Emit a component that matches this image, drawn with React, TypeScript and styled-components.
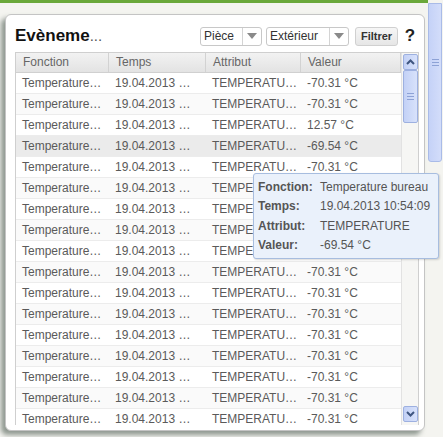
import * as React from "react";
import styled, { createGlobalStyle } from "styled-components";

const GlobalStyle = createGlobalStyle`
	html, body {
		margin: 0;
		padding: 0;
		background: #f4f4f0;
		font-family: "Liberation Sans", Arial, sans-serif;
	}
`;

// Layout
const Screen = styled.div`
	position: relative;
	display: flex;
	width: 443px;
	height: 437px;
	overflow: hidden;
`;

const Main = styled.div`
	flex: 1;
	display: flex;
	flex-direction: column;
`;

const TopBar = styled.div`
	height: 3px;
	background: #6aa83a;
`;

const Panel = styled.div`
	margin: 11px 3px 0 5px;
	height: 417px;
	box-sizing: border-box;
	background: #fff;
	border: 1px solid #c4c4c4;
	border-radius: 6px;
	box-shadow: -4px 4px 5px rgba(110, 122, 112, 0.75);
	padding: 9px 5px 0 9px;
	display: flex;
	flex-direction: column;
`;

const PanelHeader = styled.div`
	display: flex;
	align-items: center;
	height: 24px;
	margin-bottom: 4px;
`;

const Title = styled.div`
	flex: 1;
	font-size: 17px;
	font-weight: bold;
	color: #111;
	white-space: nowrap;
	span {
		font-weight: normal;
		color: #555;
		font-size: 15px;
	}
`;

const Combo = styled.div<{ width: number }>`
	display: flex;
	width: ${(p) => p.width}px;
	height: 19px;
	box-sizing: border-box;
	border: 1px solid #c8c8c8;
	border-radius: 3px;
	margin-right: 4px;
	background: #fff;
	font-size: 12px;
	color: #333;
`;

const ComboText = styled.div`
	flex: 1;
	padding-left: 3px;
	line-height: 17px;
	border-right: 1px solid #d4d4d4;
`;

const ComboArrow = styled.div`
	width: 18px;
	display: flex;
	align-items: center;
	justify-content: center;
	&::after {
		content: "";
		border-left: 5px solid transparent;
		border-right: 5px solid transparent;
		border-top: 6px solid #8a8a8a;
	}
`;

const FilterButton = styled.button`
	height: 19px;
	width: 43px;
	margin-left: 2px;
	padding: 0;
	border: 1px solid #d0d0d0;
	border-radius: 3px;
	background: linear-gradient(#f6f6f6, #e6e6e6);
	font-family: "Liberation Sans", Arial, sans-serif;
	font-size: 11px;
	font-weight: bold;
	color: #333;
`;

const Help = styled.div`
	width: 18px;
	text-align: center;
	font-size: 17px;
	font-weight: bold;
	color: #222;
	margin-left: 3px;
`;

// Grid
const GridFrame = styled.div`
	display: flex;
	width: 404px;
	height: 373px;
	box-sizing: border-box;
	border: 1px solid #cfcfcf;
	border-bottom: none;
	overflow: hidden;
`;

const GridBody = styled.div`
	flex: 1;
	display: flex;
	flex-direction: column;
	overflow: hidden;
`;

const Row = styled.div<{ $head?: boolean; $alt?: boolean; $hover?: boolean }>`
	display: grid;
	grid-template-columns: 93px 97px 95px 1fr;
	height: ${(p) => (p.$head ? 20 : 21)}px;
	flex-shrink: 0;
	box-sizing: border-box;
	border-bottom: 1px solid ${(p) => (p.$head ? "#d0d0d0" : "#ececec")};
	background: ${(p) =>
		p.$head
			? "linear-gradient(#f2f2f2, #e3e3e3)"
			: p.$hover
			? "#ebebeb"
			: p.$alt
			? "#fafafa"
			: "#fff"};
`;

const Cell = styled.div<{ $head?: boolean }>`
	padding-left: ${(p) => (p.$head ? 7 : 6)}px;
	font-size: 12px;
	line-height: ${(p) => (p.$head ? 19 : 20)}px;
	color: ${(p) => (p.$head ? "#666" : "#5a5a5a")};
	white-space: nowrap;
	overflow: hidden;
	border-right: ${(p) => (p.$head ? "1px solid #d2d2d2" : "none")};
`;

const ScrollTrack = styled.div`
	width: 17px;
	display: flex;
	flex-direction: column;
	background: #f6f6f4;
	border-left: 1px solid #e2e2e2;
	padding: 1px 0 0 1px;
	box-sizing: border-box;
`;

const ScrollButton = styled.div<{ $bottom?: boolean }>`
	width: 15px;
	height: 16px;
	box-sizing: border-box;
	margin-bottom: ${(p) => (p.$bottom ? 3 : 0)}px;
	border: 1px solid #9db0e0;
	border-radius: 2px;
	background: linear-gradient(90deg, #c3d1f6, #d8e2fb);
	display: flex;
	align-items: center;
	justify-content: center;
`;

const ScrollThumb = styled.div<{ $h: number }>`
	width: 15px;
	height: ${(p) => p.$h}px;
	box-sizing: border-box;
	border: 1px solid #9db0e0;
	border-radius: 2px;
	background: linear-gradient(90deg, #c3d1f6, #d8e2fb);
	display: flex;
	align-items: center;
	justify-content: center;
`;

const Spacer = styled.div`
	flex: 1;
`;

const Grip = styled.div`
	width: 7px;
	height: 5px;
	border-top: 1px solid #8da2d6;
	border-bottom: 1px solid #8da2d6;
	position: relative;
	&::after {
		content: "";
		position: absolute;
		left: 0;
		right: 0;
		top: 2px;
		border-top: 1px solid #8da2d6;
	}
`;

// Page scrollbar
const PageScroll = styled.div`
	width: 15px;
	padding-top: 3px;
	background: #f4f4f0;
`;

const PageThumb = styled.div`
	width: 14px;
	height: 159px;
	box-sizing: border-box;
	border: 1px solid #a9bbe8;
	border-radius: 0 0 3px 3px;
	background: linear-gradient(90deg, #c5d2f7, #d3ddfa);
	display: flex;
	justify-content: center;
	padding-top: 55px;
`;

// Tooltip
const Tooltip = styled.div`
	position: absolute;
	left: 253px;
	top: 173px;
	width: 186px;
	height: 86px;
	box-sizing: border-box;
	padding: 3px 0 0 4px;
	background: #eaf1fb;
	border: 1px solid #a7bddf;
	border-radius: 3px;
	box-shadow: 1px 1px 2px rgba(0, 0, 0, 0.15);
	display: grid;
	grid-template-columns: 62px 1fr;
	grid-auto-rows: 19.5px;
	align-items: center;
	font-size: 12px;
	color: #555;
`;

const TipLabel = styled.div`
	font-weight: bold;
	color: #555;
`;

const Arrow = ({ down }: { down?: boolean }) => (
	<svg width="9" height="6" viewBox="0 0 9 6">
		<path
			d={down ? "M1 1 L4.5 4.5 L8 1" : "M1 5 L4.5 1.5 L8 5"}
			stroke="#3f5680"
			strokeWidth="2"
			fill="none"
		/>
	</svg>
);

const values = ["-70.31 °C", "-70.31 °C", "12.57 °C", "-69.54 °C"];

export default function App() {
	const rows = Array.from({ length: 17 }, (_, i) => ({
		value: values[i] ?? "-70.31 °C",
	}));

	return (
		<Screen>
			<GlobalStyle />
			<Main>
				<TopBar />
				<Panel>
					<PanelHeader>
						<Title>
							Evèneme<span>...</span>
						</Title>
						<Combo width={62}>
							<ComboText>Pièce</ComboText>
							<ComboArrow />
						</Combo>
						<Combo width={83}>
							<ComboText>Extérieur</ComboText>
							<ComboArrow />
						</Combo>
						<FilterButton>Filtrer</FilterButton>
						<Help>?</Help>
					</PanelHeader>
					<GridFrame>
						<GridBody>
							<Row $head>
								<Cell $head>Fonction</Cell>
								<Cell $head>Temps</Cell>
								<Cell $head>Attribut</Cell>
								<Cell $head>Valeur</Cell>
							</Row>
							{rows.map((r, i) => (
								<Row key={i} $alt={i % 2 === 1} $hover={i === 3}>
									<Cell>Temperature…</Cell>
									<Cell>19.04.2013 …</Cell>
									<Cell>TEMPERATU…</Cell>
									<Cell>{r.value}</Cell>
								</Row>
							))}
						</GridBody>
						<ScrollTrack>
							<ScrollButton>
								<Arrow />
							</ScrollButton>
							<ScrollThumb $h={53}>
								<Grip />
							</ScrollThumb>
							<Spacer />
							<ScrollButton $bottom>
								<Arrow down />
							</ScrollButton>
						</ScrollTrack>
					</GridFrame>
				</Panel>
			</Main>
			<PageScroll>
				<PageThumb>
					<Grip />
				</PageThumb>
			</PageScroll>
			<Tooltip>
				<TipLabel>Fonction:</TipLabel>
				<div>Temperature bureau</div>
				<TipLabel>Temps:</TipLabel>
				<div>19.04.2013 10:54:09</div>
				<TipLabel>Attribut:</TipLabel>
				<div>TEMPERATURE</div>
				<TipLabel>Valeur:</TipLabel>
				<div>-69.54 °C</div>
			</Tooltip>
		</Screen>
	);
}
